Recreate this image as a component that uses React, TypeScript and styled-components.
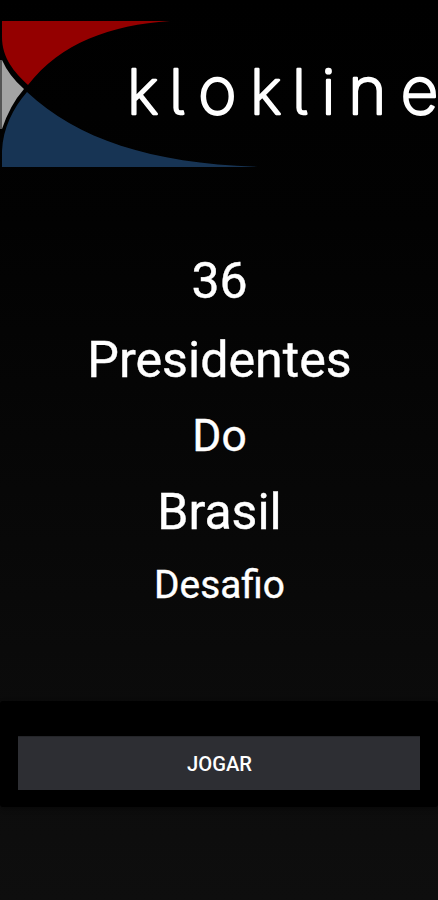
import React from "react";
import styled, { createGlobalStyle } from "styled-components";

const GlobalStyle = createGlobalStyle`
  * { box-sizing: border-box; }
  body { margin: 0; background: #000; }
`;

const Screen = styled.main`
  display: flex;
  flex-direction: column;
  width: 100%;
  max-width: 438px;
  height: 900px;
  overflow: hidden;
  background: linear-gradient(#000 0, #020202 25%, #0a0a0a 72%, #0e0e0e 100%);
  color: #fff;
  font-family: Roboto, sans-serif;
`;

const Header = styled.header`
  height: 241px;
  flex: none;
`;

const Logo = styled.svg`
  display: block;
`;

const Wordmark = styled.text`
  font-family: Inter, sans-serif;
  font-size: 62px;
  font-weight: 200;
  font-feature-settings: "cv05" 1;
  fill: #fff;
  stroke: #fff;
  stroke-width: 2.4px;
  stroke-linejoin: round;
`;

const RoundLetter = styled.tspan`
  font-size: 66px;
`;

const Title = styled.h1`
  margin: 0;
  font-weight: 400;
  text-align: center;
  -webkit-text-stroke: 0.4px #fff;
`;

const Line = styled.span<{ $size: number; $height: number }>`
  display: block;
  padding-left: 1px;
  font-size: ${(p) => p.$size}px;
  line-height: ${(p) => p.$height}px;
`;

const Panel = styled.section`
  margin-top: 84px;
  height: 106px;
  padding: 35px 18px 17px;
  border-radius: 3px;
  background: #000;
  box-shadow: 0 2px 5px rgba(0, 0, 0, 0.35);
`;

const PlayButton = styled.button`
  display: block;
  width: 100%;
  height: 54px;
  padding: 1px 0 0 1px;
  border: 0;
  border-top: 1px solid #242529;
  background: #2d2e33;
  color: #fff;
  font: 500 20.2px/52px Roboto, sans-serif;
  text-align: center;
`;

const lines = [
  { text: "36", size: 50, height: 80 },
  { text: "Presidentes", size: 50.2, height: 78 },
  { text: "Do", size: 44.3, height: 74 },
  { text: "Brasil", size: 50, height: 79 },
  { text: "Desafio", size: 38.8, height: 65 },
];

export default function App() {
  return (
    <>
      <GlobalStyle />
      <Screen>
        <Header>
          <Logo width="438" height="180" viewBox="0 0 438 180">
            <path d="M2 21H170C110 25 61 43 28 85C14 72 2 58 2 37Z" fill="#940000" />
            <path d="M2 60Q9 76 24 89Q10 105 2 129Z" fill="#a3a3a3" />
            <path d="M1 60V129" stroke="#555" strokeWidth="2" />
            <path d="M27 92C78 140 154 164 262 167H2V151C3 128 13 108 27 92Z" fill="#173454" />
            <Wordmark x="127 169 198 250 292 321.5 348 400.5" y="114">
              kl<RoundLetter>o</RoundLetter>kli<RoundLetter>ne</RoundLetter>
            </Wordmark>
          </Logo>
        </Header>
        <Title>
          {lines.map((line) => (
            <Line key={line.text} $size={line.size} $height={line.height}>
              {line.text}
            </Line>
          ))}
        </Title>
        <Panel>
          <PlayButton type="button">JOGAR</PlayButton>
        </Panel>
      </Screen>
    </>
  );
}
